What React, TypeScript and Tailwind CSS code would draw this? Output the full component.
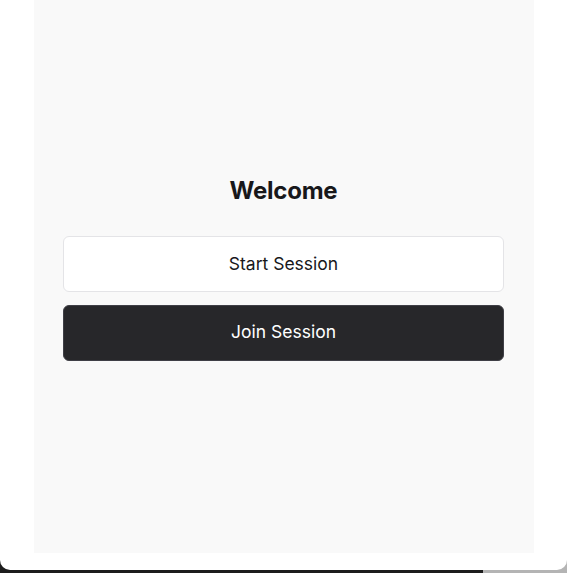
import React from 'react'

export default function App() {
  return (
    <div className="h-[573px] w-full overflow-hidden bg-[linear-gradient(to_right,#1c1c1c_483px,#b4b4b4_483px)] font-['Inter',sans-serif]">
      <div className="h-[570px] w-full rounded-b-[10px] bg-white">
        <div className="ml-[34px] flex h-[553px] w-[500px] flex-col items-center justify-center bg-[#f9f9f9] pl-[29px] pr-[30px] pb-[18px]">
          <h1 className="text-[24px] leading-[32px] font-bold tracking-[-0.01em] text-[#18181b]">Welcome</h1>
          <div className="mt-[29px] flex w-full flex-col gap-[13px]">
            <button className="h-[56px] w-full rounded-[6px] border border-[#e4e4e7] bg-white pt-[2px] text-[17.5px] text-[#18181b]">
              Start Session
            </button>
            <button className="h-[56px] w-full rounded-[6px] border border-[#3f3f46] bg-[#27272a] text-[17.5px] text-white">
              Join Session
            </button>
          </div>
        </div>
      </div>
    </div>
  )
}
